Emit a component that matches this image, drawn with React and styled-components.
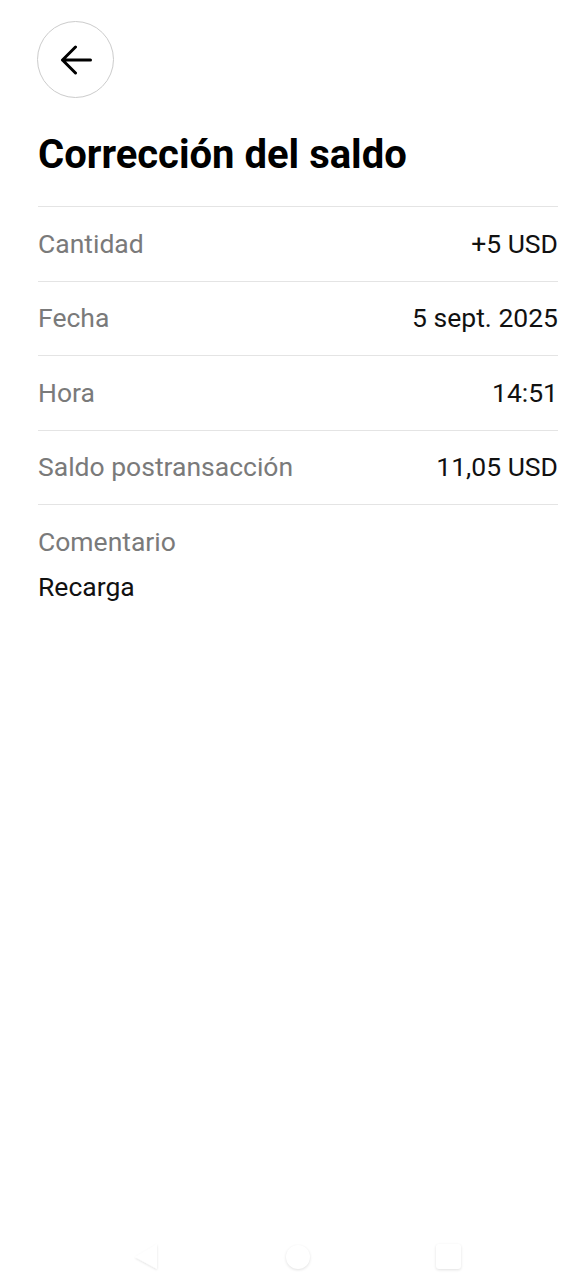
import styled, { createGlobalStyle } from "styled-components"

const GlobalStyle = createGlobalStyle`
  html, body {
    margin: 0;
    padding: 0;
    background: #ffffff;
  }
  body {
    font-family: Roboto, "Liberation Sans", sans-serif;
  }
`

const rows = [
    { label: "Cantidad", value: "+5 USD" },
    { label: "Fecha", value: "5 sept. 2025" },
    { label: "Hora", value: "14:51" },
    { label: "Saldo postransacción", value: "11,05 USD" },
]

export default function App() {
    return (
        <Page>
            <GlobalStyle />
            <Content>
                <BackButton aria-label="Atrás">
                    <svg width="32" height="30" viewBox="0 0 32 30" fill="none">
                        <path d="M30.5 15H2.5M15.5 2L2.5 15L15.5 28" stroke="#000" strokeWidth="3" strokeLinecap="round" strokeLinejoin="round" />
                    </svg>
                </BackButton>

                <Title>Corrección del saldo</Title>

                <List>
                    {rows.map(r => (
                        <Row key={r.label}>
                            <Label>{r.label}</Label>
                            <Value>{r.value}</Value>
                        </Row>
                    ))}
                </List>

                <Comment>
                    <Label>Comentario</Label>
                    <CommentText>Recarga</CommentText>
                </Comment>
            </Content>

            <NavBar>
                <svg width="28" height="30" viewBox="0 0 28 30">
                    <defs>
                        <filter id="sh" x="-30%" y="-30%" width="160%" height="160%">
                            <feDropShadow dx="0" dy="1" stdDeviation="1" floodColor="#000" floodOpacity="0.12" />
                        </filter>
                    </defs>
                    <path d="M25 2 L25 27 L3 15 Z" fill="#fff" filter="url(#sh)" />
                </svg>
                <NavCircle />
                <NavSquare />
            </NavBar>
        </Page>
    )
}

const Page = styled.div`
  width: 588px;
  height: 1288px;
  display: flex;
  flex-direction: column;
  background: #fff;
  overflow: hidden;
`

const Content = styled.main`
  flex: 1;
  display: flex;
  flex-direction: column;
  padding: 21px 30px 0 37px;
`

const BackButton = styled.button`
  width: 77px;
  height: 77px;
  border-radius: 50%;
  border: 1.5px solid #cccccc;
  background: #fff;
  display: flex;
  align-items: center;
  justify-content: center;
  padding: 0;
  cursor: pointer;
`

const Title = styled.h1`
  margin: 34px 0 0 1px;
  font-family: Roboto, "Liberation Sans", sans-serif;
  font-weight: 700;
  font-size: 40px;
  line-height: 46px;
  color: #000;
`

const List = styled.div`
  margin-top: 28px;
  margin-left: 1px;
  border-top: 1.5px solid #e4e4e4;
`

const Row = styled.div`
  box-sizing: border-box;
  display: flex;
  justify-content: space-between;
  align-items: center;
  height: 74.5px;
  border-bottom: 1.5px solid #e4e4e4;
`

const Label = styled.span`
  font-size: 26.5px;
  color: #7a7a7a;
  line-height: 30px;
`

const Value = styled.span`
  font-size: 26.5px;
  color: #111;
  line-height: 30px;
`

const Comment = styled.div`
  display: flex;
  flex-direction: column;
  gap: 15px;
  padding: 22px 0 0 1px;
`

const CommentText = styled.span`
  font-size: 26.5px;
  color: #111;
  line-height: 30px;
`

const NavBar = styled.nav`
  height: 88px;
  display: flex;
  align-items: center;
  justify-content: center;
  gap: 126px;
  padding: 25px 0 0 5px;
  box-sizing: border-box;
`

const NavCircle = styled.div`
  width: 24px;
  height: 24px;
  border-radius: 50%;
  background: #fff;
  box-shadow: 0 1px 3px rgba(0, 0, 0, 0.12);
`

const NavSquare = styled.div`
  width: 25px;
  height: 25px;
  border-radius: 3px;
  background: #fff;
  box-shadow: 0 1px 3px rgba(0, 0, 0, 0.12);
`
